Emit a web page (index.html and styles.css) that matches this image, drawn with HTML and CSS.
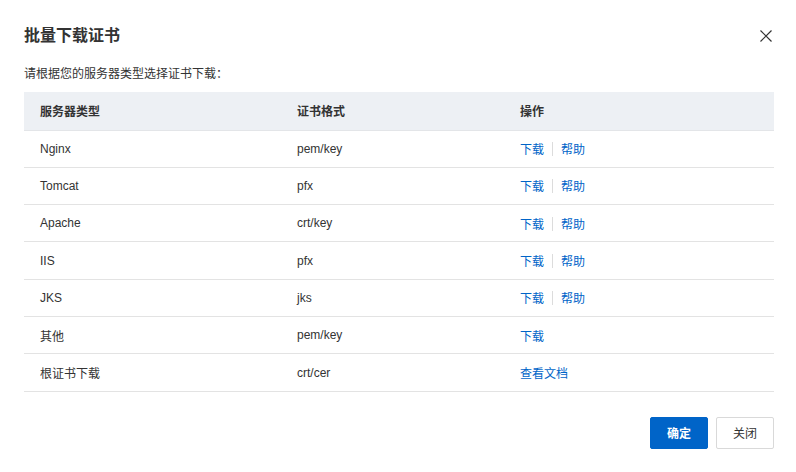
FILE: index.html
```html
<!DOCTYPE html>
<html lang="zh-CN">
<head>
<meta charset="utf-8">
<title>批量下载证书</title>
<link rel="stylesheet" href="styles.css">
</head>
<body>
<div class="dialog">
  <div class="dialog-header">
    <h1 class="dialog-title">批量下载证书</h1>
    <button class="close-btn" aria-label="关闭">
      <svg width="12" height="12" viewBox="0 0 12 12"><path d="M0.5 0.5 L11.5 11.5 M11.5 0.5 L0.5 11.5" stroke="#333" stroke-width="1.2" fill="none"/></svg>
    </button>
  </div>
  <p class="desc">请根据您的服务器类型选择证书下载：</p>
  <table class="cert-table">
    <colgroup><col class="c1"><col class="c2"><col class="c3"></colgroup>
    <thead>
      <tr><th>服务器类型</th><th>证书格式</th><th>操作</th></tr>
    </thead>
    <tbody>
      <tr><td>Nginx</td><td>pem/key</td><td><a class="link">下载</a><span class="sep"></span><a class="link">帮助</a></td></tr>
      <tr><td>Tomcat</td><td>pfx</td><td><a class="link">下载</a><span class="sep"></span><a class="link">帮助</a></td></tr>
      <tr><td>Apache</td><td>crt/key</td><td><a class="link">下载</a><span class="sep"></span><a class="link">帮助</a></td></tr>
      <tr><td>IIS</td><td>pfx</td><td><a class="link">下载</a><span class="sep"></span><a class="link">帮助</a></td></tr>
      <tr><td>JKS</td><td>jks</td><td><a class="link">下载</a><span class="sep"></span><a class="link">帮助</a></td></tr>
      <tr><td>其他</td><td>pem/key</td><td><a class="link">下载</a></td></tr>
      <tr><td>根证书下载</td><td>crt/cer</td><td><a class="link">查看文档</a></td></tr>
    </tbody>
  </table>
  <div class="dialog-footer">
    <button class="btn btn-primary">确定</button>
    <button class="btn btn-default">关闭</button>
  </div>
</div>
</body>
</html>
```
FILE: styles.css
```css
* { box-sizing: border-box; }
html, body { margin: 0; padding: 0; background: #fff; }
body {
  font-family: "Liberation Sans", "Noto Sans CJK SC", sans-serif;
  color: #333;
  font-size: 12px;
}
.dialog {
  width: 796px;
  padding: 24px 22px 24px 24px;
}
.dialog-header {
  display: flex;
  align-items: center;
  justify-content: space-between;
  height: 24px;
}
.dialog-title {
  margin: 0;
  font-size: 16px;
  font-weight: bold;
  line-height: 24px;
  color: #333;
}
.close-btn {
  border: 0;
  background: transparent;
  padding: 0;
  width: 12px;
  height: 12px;
  margin-right: 2px;
  display: flex;
  cursor: pointer;
}
.desc {
  margin: 16px 0 8px;
  line-height: 20px;
  font-size: 12px;
  color: #333;
}
.cert-table {
  width: 750px;
  border-collapse: collapse;
  table-layout: fixed;
}
.c1 { width: 257px; }
.c2 { width: 223px; }
.c3 { width: 270px; }
.cert-table th {
  background: #edf0f4;
  height: 38px;
  text-align: left;
  font-weight: bold;
  padding: 0 16px;
  border-bottom: 1px solid #e3e5e8;
  color: #333;
}
.cert-table td {
  height: 37.33px;
  padding: 0 16px;
  border-bottom: 1px solid #e3e3e3;
  color: #333;
}
.link {
  color: #0064c8;
  cursor: pointer;
}
.sep {
  display: inline-block;
  width: 1px;
  height: 14px;
  background: #dcdcdc;
  margin: 0 8px;
  vertical-align: -2px;
}
.dialog-footer {
  display: flex;
  justify-content: flex-end;
  gap: 8px;
  margin-top: 25px;
  width: 750px;
}
.btn {
  width: 58px;
  height: 32px;
  font-family: "Liberation Sans", "Noto Sans CJK SC", sans-serif;
  font-size: 12px;
  border-radius: 2px;
  cursor: pointer;
}
.btn-primary {
  background: #0064c8;
  border: 1px solid #0064c8;
  color: #fff;
  font-weight: bold;
}
.btn-default {
  background: #fff;
  border: 1px solid #d9d9d9;
  color: #333;
}
```
